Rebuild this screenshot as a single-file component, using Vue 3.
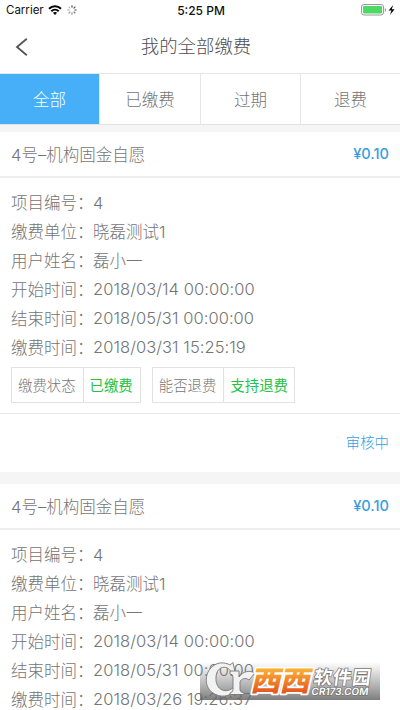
<script setup>
const tabs = ['全部', '已缴费', '过期', '退费']
const makeCard = (paid) => ({
  title: '4号–机构固金自愿',
  price: '¥0.10',
  rows: [
    ['项目编号：', '4'],
    ['缴费单位：', '晓磊测试1'],
    ['用户姓名：', '磊小一'],
    ['开始时间：', '2018/03/14 00:00:00'],
    ['结束时间：', '2018/05/31 00:00:00'],
    ['缴费时间：', paid],
  ],
})
const cards = [makeCard('2018/03/31 15:25:19'), makeCard('2018/03/26 19:26:37')]
const spokes = [0, 45, 90, 135, 180, 225, 270, 315]
</script>

<template>
  <div class="screen">
    <header class="status">
      <div class="left">
        <span class="carrier">Carrier</span>
        <svg width="14" height="10" viewBox="0 0 14 10" fill="none" stroke="#000" stroke-width="2">
          <path d="M1 3.8C4.4.5 9.6.5 13 3.8" />
          <path d="M3.3 6.2c2.1-2 5.3-2 7.4 0" />
          <path d="M7 9.9 4.9 7.8c1.2-1.1 3-1.1 4.2 0z" fill="#000" stroke="none" />
        </svg>
        <svg width="10" height="10" viewBox="-5 -5 10 10" stroke="#333" stroke-width="1">
          <line v-for="(a, i) in spokes" :key="a" x1="0" y1="-2.4" x2="0" y2="-4.7" :transform="`rotate(${a})`" :opacity="1 - i * 0.09" />
        </svg>
      </div>
      <span class="time">5:25 PM</span>
      <div class="right">
        <svg width="36" height="12" viewBox="0 0 36 12">
          <rect x="1.5" y="0.5" width="22" height="10.5" rx="2.5" fill="#fff" stroke="#999" />
          <rect x="3" y="2" width="19" height="7.5" rx="1" fill="#4cd964" />
          <path d="M24.8 4v4q1.3-.6 1.3-2t-1.3-2z" fill="#999" />
          <path d="M33.2 1 28.6 6.5h2.900L29.900 11 34.600 5.200h-2.900z" fill="#000" />
        </svg>
      </div>
    </header>

    <nav class="nav">
      <svg class="back" width="14" height="20" viewBox="0 0 14 20" fill="none" stroke="#555" stroke-width="1.8">
        <path d="M11.8 1.8 2 10l9.8 8.2" />
      </svg>
      <h1>我的全部缴费</h1>
    </nav>

    <div class="tabs">
      <div v-for="(t, i) in tabs" :key="t" class="tab" :class="{ active: i === 0 }">{{ t }}</div>
    </div>

    <main>
      <section v-for="(c, i) in cards" :key="i" class="card">
        <div class="head">
          <span>{{ c.title }}</span>
          <span class="price">{{ c.price }}</span>
        </div>
        <div class="body">
          <div v-for="(r, n) in c.rows" :key="r[0]" class="row">
            <span class="label">{{ r[0] }}</span><span class="value" :class="{ date: n > 2 }">{{ r[1] }}</span>
          </div>
          <div class="tags">
            <div class="tag"><span>缴费状态</span><b>已缴费</b></div>
            <div class="tag"><span>能否退费</span><b>支持退费</b></div>
          </div>
        </div>
        <div class="foot">审核中</div>
      </section>
    </main>

    <div class="mark">
      <svg width="182" height="42" viewBox="0 0 182 42">
        <defs>
          <linearGradient id="band" x1="0" y1="0" x2="0" y2="1">
            <stop offset="0" stop-color="#777" stop-opacity="0" />
            <stop offset="0.5" stop-color="#777" stop-opacity="0.45" />
            <stop offset="1" stop-color="#666" stop-opacity="0.85" />
          </linearGradient>
          <linearGradient id="flame" x1="0" y1="0" x2="0" y2="1">
            <stop offset="0.2" stop-color="#f8ae35" />
            <stop offset="0.95" stop-color="#e34a1c" />
          </linearGradient>
        </defs>
        <rect x="0" y="2" width="180" height="38" fill="url(#band)" />
        <g stroke="#777" stroke-width="0.9" fill="#f2f2f2" stroke-linejoin="round">
          <path d="M33 2.500 35 12h-4C28 5 17 5 16 17c-1 14 11 17 18 10l2 3C30 37 20 38 13 33 4 27 4 13 13 6c5-4 12-4 17-1z" />
          <path d="M30 11h9v6c4-6 11-7 16-4l-6 7c-4-3-8-1-9 2v8q0 2 4 3v1.500H30V33q3-1 3-3V17q0-3-3-3z" />
        </g>
        <text class="west" transform="translate(50 30.500) skewX(-13) scale(1.080 1)" x="0" y="0" textLength="55" fill="url(#flame)">西西</text>
        <text class="brand" transform="translate(113 23.500) skewX(-8)" x="0" y="0" textLength="57">软件园</text>
        <text class="domain" transform="translate(111 35) skewX(-8)" x="0" y="0" textLength="57" lengthAdjust="spacingAndGlyphs">CR173.COM</text>
      </svg>
    </div>
  </div>
</template>

<style>
body { margin: 0; background: #fff; overflow: hidden; }
</style>

<style scoped>
.screen {
  position: relative;
  width: 400px;
  height: 710px;
  overflow: hidden;
  background: #fff;
  color: #757575;
  font-family: Inter, "Noto Sans CJK SC", sans-serif;
  font-size: 16.5px;
  font-weight: 300;
}
.status {
  display: grid;
  grid-template-columns: 1fr auto 1fr;
  align-items: center;
  height: 20px;
  padding: 0 4px 0 6px;
  color: #111;
  font-size: 11.5px;
  font-weight: 400;
}
.left { display: flex; align-items: center; gap: 5px; }
.carrier { width: 37px; }
.time { font-weight: 500; font-size: 12px; }
.right { display: flex; justify-content: flex-end; }
.nav {
  display: grid;
  grid-template-columns: 50px 1fr 58px;
  align-items: center;
  height: 53px;
}
.back { margin-left: 15px; }
h1 {
  margin: 0;
  color: #505050;
  font-size: 18.4px;
  font-weight: 300;
  line-height: 53px;
  text-align: center;
}
.tabs {
  display: grid;
  grid-template-columns: 99px 101px 100px 100px;
  height: 50px;
  border-top: 1px solid #e6e6e6;
  border-bottom: 1px solid #e2e2e2;
}
.tab {
  border-left: 1px solid #e6e6e6;
  line-height: 53px;
  height: 50px;
  text-align: center;
}
.tab.active { border-left: 0; background: #46aff7; color: #fff; }
main { display: flex; flex-direction: column; gap: 12px; padding-top: 7px; background: #f5f5f5; }
.card { height: 340px; background: #fff; }
.head {
  display: flex;
  justify-content: space-between;
  height: 44px;
  padding: 0 11px;
  border-bottom: 2px solid #eee;
  line-height: 46px;
}
.price { color: #369ee2; font-size: 14.6px; font-weight: 500; line-height: 44px; }
.body { height: 225px; padding: 10px 11px 0; border-bottom: 1px solid #e8e8e8; }
.row { display: flex; height: 29px; line-height: 31px; white-space: nowrap; }
.label { width: 82px; }
.date { letter-spacing: 0.06px; line-height: 29px; }
.tags { display: flex; gap: 11px; margin-top: 5px; }
.tag {
  display: flex;
  height: 34px;
  border: 1px solid #e2e2e2;
  font-size: 14.4px;
  line-height: 35px;
}
.tag span { padding: 0 7px 0 6px; }
.tag b { padding: 0 7px 0 6px; border-left: 1px solid #e2e2e2; color: #20c344; font-weight: 400; }
.tag + .tag b { padding-right: 6px; }
.foot { padding-right: 11px; color: #369ee2; font-size: 14.4px; line-height: 58px; text-align: right; }
.mark { position: absolute; left: 200px; top: 660px; height: 42px; }
.west {
  stroke: #fff;
  stroke-width: 3.5px;
  stroke-linejoin: round;
  paint-order: stroke;
  font-size: 28px;
  font-weight: 900;
}
.brand {
  fill: #fff;
  stroke: #777;
  stroke-width: 1.5px;
  paint-order: stroke;
  font-size: 18.5px;
  font-weight: 700;
}
.domain {
  fill: #fff;
  stroke: #777;
  stroke-width: 1.5px;
  paint-order: stroke;
  font-size: 10px;
  font-weight: 600;
}
</style>
